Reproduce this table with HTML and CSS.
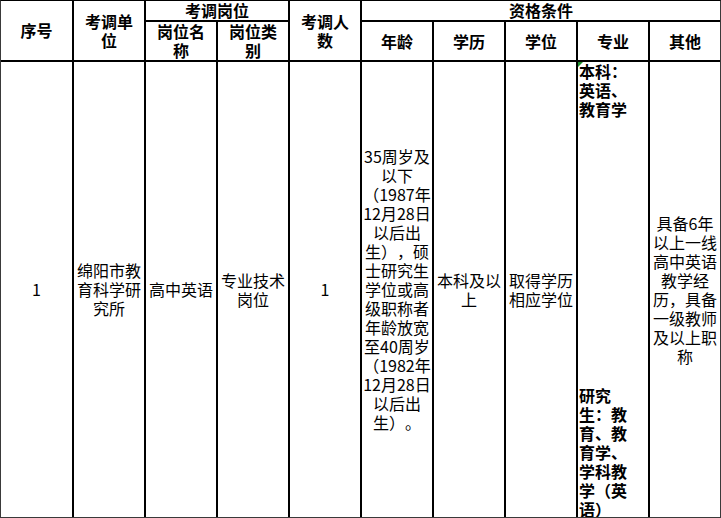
FILE: index.html
```html
<!DOCTYPE html>
<html lang="zh-CN">
<head>
<meta charset="utf-8">
<title>考调岗位</title>
<link rel="stylesheet" href="styles.css">
</head>
<body>
<div class="sheet">
  <div class="grid">
    <div class="cell head span-rows">序号</div>
    <div class="cell head span-rows">考调单<br>位</div>
    <div class="cell head group">考调岗位</div>
    <div class="cell head span-rows">考调人<br>数</div>
    <div class="cell head group2">资格条件</div>

    <div class="cell head">岗位名<br>称</div>
    <div class="cell head">岗位类<br>别</div>
    <div class="cell head">年龄</div>
    <div class="cell head">学历</div>
    <div class="cell head">学位</div>
    <div class="cell head">专业</div>
    <div class="cell head">其他</div>

    <div class="cell body">1</div>
    <div class="cell body">绵阳市教<br>育科学研<br>究所</div>
    <div class="cell body">高中英语</div>
    <div class="cell body">专业技术<br>岗位</div>
    <div class="cell body">1</div>
    <div class="cell body">35周岁及<br>以下<br>（1987年<br>12月28日<br>以后出<br>生），硕<br>士研究生<br>学位或高<br>级职称者<br>年龄放宽<br>至40周岁<br>（1982年<br>12月28日<br>以后出<br>生）。</div>
    <div class="cell body">本科及以<br>上</div>
    <div class="cell body">取得学历<br>相应学位</div>
    <div class="cell body major">
      <span class="flag"></span>
      <div class="major-top">本科：<br>英语、<br>教育学</div>
      <div class="major-bottom">研究<br>生：教<br>育、教<br>育学、<br>学科教<br>学（英<br>语）</div>
    </div>
    <div class="cell body">具备6年<br>以上一线<br>高中英语<br>教学经<br>历，具备<br>一级教师<br>及以上职<br>称</div>
  </div>
</div>
</body>
</html>
```

FILE: styles.css
```css
html, body {
  margin: 0;
  padding: 0;
  background: #fff;
}

.sheet {
  width: 721px;
  height: 518px;
  box-sizing: border-box;
  border: 1px solid #3a3a3a;
  border-top-color: #000;
  background: #000;
  overflow: hidden;
}

.grid {
  display: grid;
  grid-template-columns: 71px repeat(9, 70px);
  grid-template-rows: 19px 38px 455px;
  gap: 2px;
  background: #000;
  font-family: "Noto Sans CJK SC", "Noto Sans", sans-serif;
  font-size: 16px;
  line-height: 19px;
  color: #000;
  text-spacing-trim: space-all;
}

.cell {
  background: #fff;
  display: flex;
  align-items: center;
  justify-content: center;
  text-align: center;
  white-space: nowrap;
}

.head {
  font-weight: 700;
}

.span-rows {
  grid-row: span 2;
}

.group {
  grid-column: span 2;
}

.group2 {
  grid-column: span 5;
}

.major {
  position: relative;
  flex-direction: column;
  align-items: flex-start;
  justify-content: flex-start;
  text-align: left;
  font-weight: 700;
  padding-left: 1px;
  overflow: hidden;
}

.major-bottom {
  margin-top: 267px;
}

.flag {
  position: absolute;
  left: 0;
  top: 0;
  width: 0;
  height: 0;
  border-top: 5px solid #1f8f2e;
  border-right: 5px solid transparent;
}
```
